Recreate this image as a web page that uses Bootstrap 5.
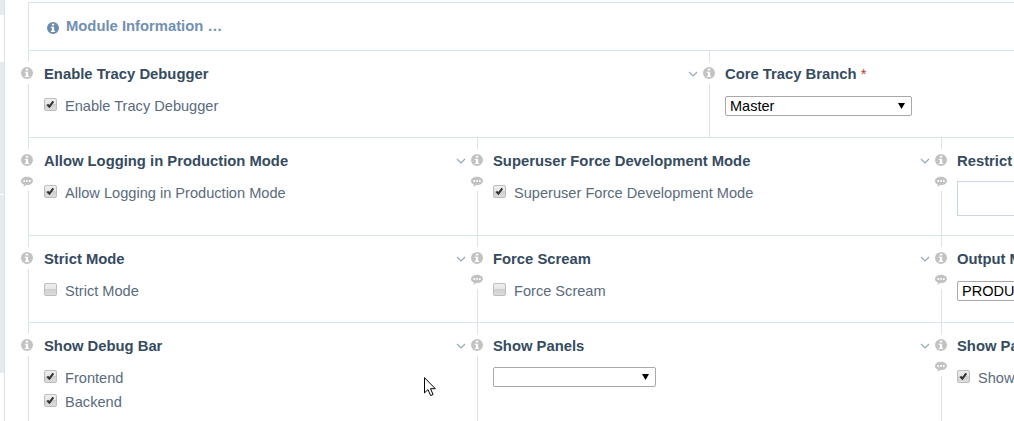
<!DOCTYPE html>
<html lang="en">
<head>
  <meta charset="UTF-8" />
  <meta name="viewport" content="width=device-width, initial-scale=1.0" />
  <title>Module: Tracy Debugger</title>
  <link href="https://cdn.jsdelivr.net/npm/bootstrap@5.3.3/dist/css/bootstrap.min.css" rel="stylesheet">
  <style>
    html, body { height: 421px; overflow: hidden; }
    body { font-family: "Liberation Sans", Arial, sans-serif; font-size: 14.6px; color: #5a6b7c; background: #fff; position: relative; }

    .side-strip { width: 5px; height: 421px; flex: none; border-right: 1px solid #d9e3ec; }
    .strip-block { background: #e4eaee; margin-bottom: 1px; }
    .strip-a { height: 15px; margin-bottom: 47px; }
    .strip-b { height: 132px; }
    .strip-c { height: 178px; }

    .module-form { width: 1200px; flex: none; margin: 2px 0 0 23px; border-top: 1px solid #d9e3ec; border-left: 1px solid #d9e3ec; }
    .module-head { height: 47px; padding-left: 18px; color: #7190b3; font-weight: 700; font-size: 14.8px; }
    .module-head svg { width: 12px; height: 12px; color: #6a8cae; margin-top: 2px; }
    .module-head span { margin-left: -1px; }

    .form-line { border-top: 1px solid #d9e3ec; }
    .field { position: relative; flex: none; padding: 13px 0 19px 15px; border-left: 1px solid #d9e3ec; }
    .form-line .field:first-child { border-left: 0; }
    .w-first { width: 448px; }
    .w-second { width: 464px; }
    .w-wide { width: 680px; }

    .field-label { height: 20px; margin-bottom: 10px; line-height: 20px; font-weight: 700; font-size: 14.8px; color: #354b60; white-space: nowrap; }
    .req { color: #c0392b; font-weight: 400; }

    .check-row { height: 24px; line-height: 24px; gap: 8px; white-space: nowrap; }
    .check-row .form-check-input { width: 13px; height: 13px; margin: -3px 0 0 0; flex: none; border: 1px solid #bdbdbd; border-radius: 2px; background-color: #ddd; background-image: linear-gradient(#eee, #e6e6e6 45%, #cfcfcf 50%, #ddd); }
    .check-row .form-check-input:checked { background-image: url("data:image/svg+xml,%3Csvg xmlns='http://www.w3.org/2000/svg' viewBox='0 0 13 13'%3E%3Cpath fill='none' stroke='%23333' stroke-width='2.4' d='M2.800 6.500l2.400 2.500 4.600-6.200'/%3E%3C/svg%3E"), linear-gradient(#eee, #e6e6e6 45%, #cfcfcf 50%, #ddd); }

    .native-select { display: block; height: 20px; margin-top: 12px; padding: 0 0 0 4px; border: 1px solid #a9a9a9; border-radius: 2px; font-size: 14.500px; line-height: 18px; color: #000; background-color: #fff; background-size: 7px 6px; background-position: right 6px center; background-image: url("data:image/svg+xml,%3Csvg xmlns='http://www.w3.org/2000/svg' viewBox='0 0 7 6'%3E%3Cpath d='M0 0h7L3.500 6z'/%3E%3C/svg%3E"); }
    .sel-branch { width: 187px; }
    .sel-panels { width: 163px; margin-top: 11px; }
    .sel-output { width: 187px; }
    .restrict-box { width: 300px; height: 35px; border: 1px solid #c8d6e4; }

    .field-tools { position: absolute; left: -8px; top: 11px; width: 14px; height: 22px; background: #fff; display: flex; flex-direction: column; align-items: center; padding-top: 5px; gap: 10px; color: #c2c2c2; }
    .form-line .field:first-child .field-tools { left: -9px; }
    .field-tools.with-note { height: 42px; }
    .field-tools svg { width: 12px; height: 12px; flex: none; }
    .fold-arrow { position: absolute; left: -22px; top: 20px; width: 10px; height: 6px; color: #8fa6bd; }

    .mouse-pointer { position: absolute; left: 424px; top: 377px; width: 13px; height: 20px; }
  </style>
</head>
<body class="d-flex">
  <svg class="d-none">
    <symbol id="ico-info" viewBox="0 0 12 12"><path fill="currentColor" fill-rule="evenodd" d="M6 0a6 6 0 1 1 0 12A6 6 0 0 1 6 0zM4.800 1.800v1.800h2.400V1.800zM3.900 4.800v1.200h1v2.800h-1V10h4.200V8.800h-1v-4z"/></symbol>
    <symbol id="ico-note" viewBox="0 0 12 12"><path fill="currentColor" fill-rule="evenodd" d="M6 .8c3.300 0 6 1.800 6 4.100S9.300 9 6 9h-.8C4.300 9.800 3.200 10.500 2 10.800c.5-.7.900-1.400 1-2.300C1.200 7.800 0 6.500 0 4.900 0 2.600 2.700.8 6 .8zM3.200 4a1 1 0 1 0 0 2 1 1 0 0 0 0-2zM6 4a1 1 0 1 0 0 2 1 1 0 0 0 0-2zM8.800 4a1 1 0 1 0 0 2 1 1 0 0 0 0-2z"/></symbol>
    <symbol id="ico-fold" viewBox="0 0 10 6"><path fill="none" stroke="currentColor" stroke-width="1.1" d="M1 1l4 4 4-4"/></symbol>
  </svg>

  <div class="side-strip">
    <div class="strip-block strip-a"></div>
    <div class="strip-block strip-b"></div>
    <div class="strip-block strip-c"></div>
  </div>

  <div class="module-form">
    <div class="module-head d-flex align-items-center gap-2">
      <svg><use href="#ico-info"/></svg>
      <span>Module Information …</span>
    </div>

    <div class="form-line d-flex">
      <div class="field w-wide">
        <div class="field-tools"><svg><use href="#ico-info"/></svg></div>
        <div class="field-label">Enable Tracy Debugger</div>
        <label class="check-row d-flex align-items-center"><input class="form-check-input" type="checkbox" checked>Enable Tracy Debugger</label>
      </div>
      <div class="field flex-grow-1">
        <svg class="fold-arrow"><use href="#ico-fold"/></svg>
        <div class="field-tools"><svg><use href="#ico-info"/></svg></div>
        <div class="field-label">Core Tracy Branch <span class="req">*</span></div>
        <select class="native-select form-select sel-branch"><option>Master</option></select>
      </div>
    </div>

    <div class="form-line d-flex">
      <div class="field w-first">
        <div class="field-tools with-note"><svg><use href="#ico-info"/></svg><svg><use href="#ico-note"/></svg></div>
        <div class="field-label">Allow Logging in Production Mode</div>
        <label class="check-row d-flex align-items-center"><input class="form-check-input" type="checkbox" checked>Allow Logging in Production Mode</label>
      </div>
      <div class="field w-second">
        <svg class="fold-arrow"><use href="#ico-fold"/></svg>
        <div class="field-tools with-note"><svg><use href="#ico-info"/></svg><svg><use href="#ico-note"/></svg></div>
        <div class="field-label">Superuser Force Development Mode</div>
        <label class="check-row d-flex align-items-center"><input class="form-check-input" type="checkbox" checked>Superuser Force Development Mode</label>
      </div>
      <div class="field flex-grow-1">
        <svg class="fold-arrow"><use href="#ico-fold"/></svg>
        <div class="field-tools with-note"><svg><use href="#ico-info"/></svg><svg><use href="#ico-note"/></svg></div>
        <div class="field-label">Restrict Superuser Force Development</div>
        <div class="restrict-box"></div>
      </div>
    </div>

    <div class="form-line d-flex">
      <div class="field w-first">
        <div class="field-tools"><svg><use href="#ico-info"/></svg></div>
        <div class="field-label">Strict Mode</div>
        <label class="check-row d-flex align-items-center"><input class="form-check-input" type="checkbox">Strict Mode</label>
      </div>
      <div class="field w-second">
        <svg class="fold-arrow"><use href="#ico-fold"/></svg>
        <div class="field-tools with-note"><svg><use href="#ico-info"/></svg><svg><use href="#ico-note"/></svg></div>
        <div class="field-label">Force Scream</div>
        <label class="check-row d-flex align-items-center"><input class="form-check-input" type="checkbox">Force Scream</label>
      </div>
      <div class="field flex-grow-1">
        <svg class="fold-arrow"><use href="#ico-fold"/></svg>
        <div class="field-tools with-note"><svg><use href="#ico-info"/></svg><svg><use href="#ico-note"/></svg></div>
        <div class="field-label">Output Mode</div>
        <select class="native-select form-select sel-output"><option>PRODUCTION</option></select>
      </div>
    </div>

    <div class="form-line d-flex">
      <div class="field w-first">
        <div class="field-tools"><svg><use href="#ico-info"/></svg></div>
        <div class="field-label">Show Debug Bar</div>
        <label class="check-row d-flex align-items-center"><input class="form-check-input" type="checkbox" checked>Frontend</label>
        <label class="check-row d-flex align-items-center"><input class="form-check-input" type="checkbox" checked>Backend</label>
      </div>
      <div class="field w-second">
        <svg class="fold-arrow"><use href="#ico-fold"/></svg>
        <div class="field-tools"><svg><use href="#ico-info"/></svg></div>
        <div class="field-label">Show Panels</div>
        <select class="native-select form-select sel-panels"><option></option></select>
      </div>
      <div class="field flex-grow-1">
        <svg class="fold-arrow"><use href="#ico-fold"/></svg>
        <div class="field-tools with-note"><svg><use href="#ico-info"/></svg><svg><use href="#ico-note"/></svg></div>
        <div class="field-label">Show Panel Selector</div>
        <label class="check-row d-flex align-items-center"><input class="form-check-input" type="checkbox" checked>Show Panel Selector</label>
      </div>
    </div>
  </div>

  <svg class="mouse-pointer" viewBox="0 0 13 20"><path fill="#fff" stroke="#000" d="M.5.7v15.200l3.500-3.300 2.600 6 2.500-1.100-2.600-5.800h4.800z"/></svg>
</body>
</html>
